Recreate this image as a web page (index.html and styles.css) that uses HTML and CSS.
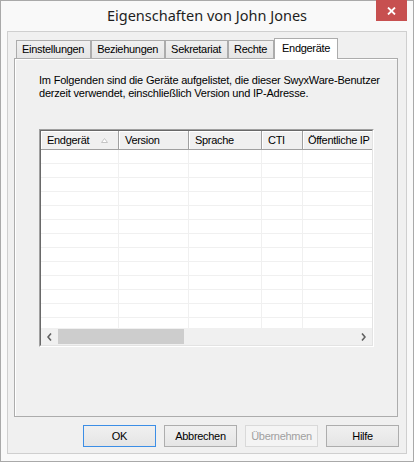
FILE: index.html
```html
<!DOCTYPE html>
<html lang="de">
<head>
    <meta charset="UTF-8">
    <meta name="viewport" content="width=device-width, initial-scale=1.0">
    <title>Eigenschaften von John Jones</title>
    <link rel="stylesheet" href="styles.css">
</head>
<body>
    <div class="window">
        <div class="titlebar">
            <span class="title">Eigenschaften von John Jones</span>
            <button class="close-button" aria-label="Schließen">
                <svg width="9" height="8" viewBox="0 0 9 8">
                    <path d="M1 0.5 L8 7.5 M8 0.5 L1 7.5" stroke="#fff" stroke-width="1.8" fill="none"/>
                </svg>
            </button>
        </div>

        <div class="client">
            <!-- Tabs -->
            <div class="tabs">
                <div class="tab">Einstellungen</div>
                <div class="tab">Beziehungen</div>
                <div class="tab">Sekretariat</div>
                <div class="tab">Rechte</div>
                <div class="tab active">Endgeräte</div>
            </div>

            <div class="tab-page">
                <p class="intro">Im Folgenden sind die Geräte aufgelistet, die dieser SwyxWare-Benutzer<br>derzeit verwendet, einschließlich Version und IP-Adresse.</p>

                <div class="listview">
                    <div class="listview-inner">
                        <div class="lv-header">
                            <div class="lv-col col-1">
                                <span>Endgerät</span>
                                <svg class="sort-arrow" width="7" height="5" viewBox="0 0 7 5">
                                    <path d="M3.5 0.5 L6.5 4.5 L0.5 4.5 Z" fill="#fff" stroke="#c4c4c4" stroke-width="1"/>
                                </svg>
                            </div>
                            <div class="lv-col col-2">Version</div>
                            <div class="lv-col col-3">Sprache</div>
                            <div class="lv-col col-4">CTI</div>
                            <div class="lv-col col-5">Öffentliche IP</div>
                        </div>
                        <div class="lv-body" id="lvBody">
                            <!-- rows are inserted by the script below -->
                        </div>
                        <div class="hscroll">
                            <div class="scroll-btn">
                                <svg width="5" height="8" viewBox="0 0 5 8"><path d="M4 0.5 L1 4 L4 7.5" stroke="#606060" stroke-width="1.6" fill="none"/></svg>
                            </div>
                            <div class="scroll-track">
                                <div class="scroll-thumb"></div>
                            </div>
                            <div class="scroll-btn">
                                <svg width="5" height="8" viewBox="0 0 5 8"><path d="M1 0.5 L4 4 L1 7.5" stroke="#606060" stroke-width="1.6" fill="none"/></svg>
                            </div>
                        </div>
                    </div>
                </div>
            </div>

            <div class="dialog-buttons">
                <button class="btn default">OK</button>
                <button class="btn">Abbrechen</button>
                <button class="btn" disabled>Übernehmen</button>
                <button class="btn">Hilfe</button>
            </div>
        </div>
    </div>

    <script>
        // Empty grid rows of the device list
        const body = document.getElementById("lvBody");
        for (let i = 0; i < 13; i++) {
            const row = document.createElement("div");
            row.className = "lv-row";
            row.innerHTML = '<div class="lv-cell col-1"></div><div class="lv-cell col-2"></div>' +
                '<div class="lv-cell col-3"></div><div class="lv-cell col-4"></div><div class="lv-cell col-5"></div>';
            body.appendChild(row);
        }
    </script>
</body>
</html>
```

FILE: styles.css
```css
/* Base */
* {
    margin: 0;
    padding: 0;
    box-sizing: border-box;
}

body {
    font-family: "Liberation Sans", Arial, sans-serif;
    font-size: 11px;
    letter-spacing: -0.3px;
    color: #000;
    background-color: #fff;
}

/* Window frame */
.window {
    position: relative;
    width: 414px;
    height: 462px;
    border: 1px solid #a9a9a9;
    background-color: #f9f9f9;
    padding: 0 6px 7px 6px;
    display: flex;
    flex-direction: column;
}

.titlebar {
    height: 30px;
    display: flex;
    align-items: center;
    justify-content: center;
    padding-bottom: 2px;
}

.title {
    font-family: "Noto Sans", "Open Sans", sans-serif;
    font-size: 14.5px;
    letter-spacing: 0;
    color: #1e1e1e;
}

.close-button {
    position: absolute;
    top: -1px;
    right: 6px;
    width: 31px;
    height: 21px;
    border: none;
    background-color: #c75050;
    display: flex;
    align-items: center;
    justify-content: center;
}

/* Client area */
.client {
    flex: 1;
    border: 1px solid #cfcfcf;
    background-color: #f0f0f0;
    padding: 6px 8px 6px 6px;
    display: flex;
    flex-direction: column;
}

/* Tabs */
.tabs {
    display: flex;
    align-items: flex-end;
    height: 20px;
    padding-left: 2px;
}

.tab {
    height: 18px;
    line-height: 16px;
    padding: 0 6px 0 5px;
    border: 1px solid #acacac;
    border-bottom: none;
    background: linear-gradient(#f0f0f0, #e5e5e5);
}

.tab.active {
    position: relative;
    z-index: 1;
    height: 21px;
    margin-bottom: -1px;
    padding: 1px 7px 0 7px;
    background: #fff;
}

.tab-page {
    height: 359px;
    border: 1px solid #acacac;
    box-shadow: inset 1px 1px 0 #fff;
    padding: 15px 0 0 24px;
}

.intro {
    line-height: 13px;
    letter-spacing: -0.2px;
    margin-bottom: 29px;
}

/* List view */
.listview {
    width: 335px;
    height: 218px;
    border: 1px solid;
    border-color: #a0a0a0 #fff #fff #a0a0a0;
}

.listview-inner {
    height: 100%;
    border: 1px solid;
    border-color: #696969 #e3e3e3 #e3e3e3 #696969;
    background-color: #fff;
    display: flex;
    flex-direction: column;
    overflow: hidden;
}

.lv-header {
    display: flex;
    height: 19px;
    flex-shrink: 0;
    background-color: #f0f0f0;
    border-bottom: 1px solid #a0a0a0;
}

.lv-col {
    flex-shrink: 0;
    display: flex;
    align-items: center;
    padding-left: 6px;
    white-space: nowrap;
    overflow: hidden;
    border-right: 1px solid #a0a0a0;
    box-shadow: inset 1px 1px 0 #fff;
}

.lv-header .col-1 {
    justify-content: space-between;
    padding-right: 10px;
}

.col-1 { width: 78px; }
.col-2 { width: 70px; }
.col-3 { width: 73px; }
.col-4 { width: 41px; }
.col-5 { width: 90px; }

.lv-header .col-5 {
    width: 69px;
    padding-left: 5px;
    border-right: none;
}

.lv-body {
    flex: 1;
    overflow: hidden;
}

.lv-row {
    display: flex;
    height: 14px;
    border-bottom: 1px solid #f0f0f0;
}

.lv-cell {
    flex-shrink: 0;
    border-right: 1px solid #f0f0f0;
}

/* Horizontal scroll bar */
.hscroll {
    display: flex;
    height: 17px;
    flex-shrink: 0;
    background-color: #f0f0f0;
}

.scroll-btn {
    width: 17px;
    display: flex;
    align-items: center;
    justify-content: center;
}

.scroll-track {
    flex: 1;
    padding: 1px 0;
}

.scroll-thumb {
    width: 126px;
    height: 100%;
    background-color: #cdcdcd;
}

/* Dialog buttons */
.dialog-buttons {
    display: flex;
    justify-content: flex-end;
    gap: 8px;
    margin-top: 8px;
    margin-right: -1px;
}

.btn {
    width: 73px;
    height: 22px;
    font-family: inherit;
    font-size: 11px;
    letter-spacing: -0.3px;
    color: #000;
    border: 1px solid #adadad;
    background: linear-gradient(#f0f0f0, #e5e5e5);
}

.btn.default {
    border-color: #3c8ee6;
}

.btn:disabled {
    color: #a0a0a0;
    border-color: #d9d9d9;
    background: #f4f4f4;
}
```
